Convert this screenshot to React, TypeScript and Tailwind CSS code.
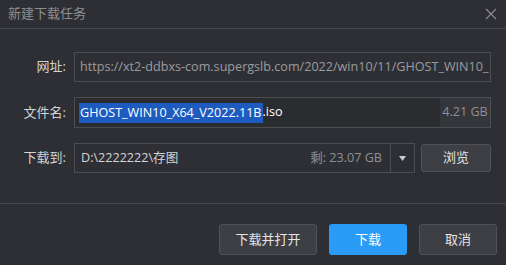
import React from 'react';

const font = { fontFamily: '"Open Sans", "Noto Sans CJK SC", sans-serif' };

export default function App() {
    return (
        <div className="w-[506px] h-[265px] bg-[#2e2f34] text-[13px] overflow-hidden" style={font}>
            {/* title bar */}
            <div className="h-[29px] flex items-center justify-between pl-[8px] pr-[8px] border-b border-[#45464b]">
                <span className="text-[#8d8e92] text-[13px]">新建下载任务</span>
                <svg width="12" height="12" viewBox="0 0 12 12" className="mr-[1px]">
                    <path d="M1 1L11 11M11 1L1 11" stroke="#8d8e92" strokeWidth="1.1" />
                </svg>
            </div>

            <div className="pt-[23px] pl-[16px] pr-[15px] flex flex-col gap-[15px]">
                {/* url */}
                <div className="flex items-center">
                    <label className="w-[58px] text-right pr-[8px] text-[#d3d4d6]">网址:</label>
                    <div className="flex-1 h-[30px] border border-[#4c4d52] flex items-center pl-[5px] overflow-hidden whitespace-nowrap">
                        <span className="text-[#9b9ca0] text-[12.6px]">https://xt2-ddbxs-com.supergslb.com/2022/win10/11/GHOST_WIN10_</span>
                    </div>
                </div>

                {/* file name */}
                <div className="flex items-center">
                    <label className="w-[58px] text-right pr-[8px] text-[#d3d4d6]">文件名:</label>
                    <div className="flex-1 h-[31px] border border-[#4c4d52] flex items-stretch">
                        <div className="flex-1 flex items-center pl-[4px] bg-[#2b2c30] text-[12.6px]">
                            <span className="bg-[#1e5bbf] text-white px-[1px] leading-[20px]">GHOST_WIN10_X64_V2022.11B</span>
                            <span className="text-white">.iso</span>
                        </div>
                        <div className="w-[50px] flex items-center justify-center bg-[#35363b] text-[#8e8f93] text-[12.6px]">4.21 GB</div>
                    </div>
                </div>

                {/* save path */}
                <div className="flex items-center">
                    <label className="w-[58px] text-right pr-[8px] text-[#d3d4d6]">下载到:</label>
                    <div className="w-[341px] h-[30px] border border-[#4c4d52] flex items-stretch">
                        <div className="flex-1 flex items-center justify-between pl-[6px] pr-[8px] text-[12.6px]">
                            <span className="text-[#d3d4d6]">D:\2222222\存图</span>
                            <span className="text-[#8e8f93]">剩: 23.07 GB</span>
                        </div>
                        <div className="w-[24px] border-l border-[#4c4d52] flex items-center justify-center">
                            <svg width="7" height="5" viewBox="0 0 7 5">
                                <path d="M0 0H7L3.5 5Z" fill="#c9cacd" />
                            </svg>
                        </div>
                    </div>
                    <button className="ml-[6px] w-[70px] h-[28px] rounded-[3px] bg-[#3e3f44] border border-[#505156] text-[#e4e4e6]">浏览</button>
                </div>
            </div>

            {/* footer */}
            <div className="mt-[30px] border-t border-[#45464b] pt-[20px] pr-[9px] flex justify-end gap-[12px]">
                <button className="w-[98px] h-[31px] rounded-[3px] bg-[#3e3f44] border border-[#505156] text-[#e4e4e6]">下载并打开</button>
                <button className="w-[78px] h-[31px] rounded-[3px] bg-[#2a9bf7] text-white">下载</button>
                <button className="w-[78px] h-[31px] rounded-[3px] bg-[#3e3f44] border border-[#505156] text-[#e4e4e6]">取消</button>
            </div>
        </div>
    );
}
